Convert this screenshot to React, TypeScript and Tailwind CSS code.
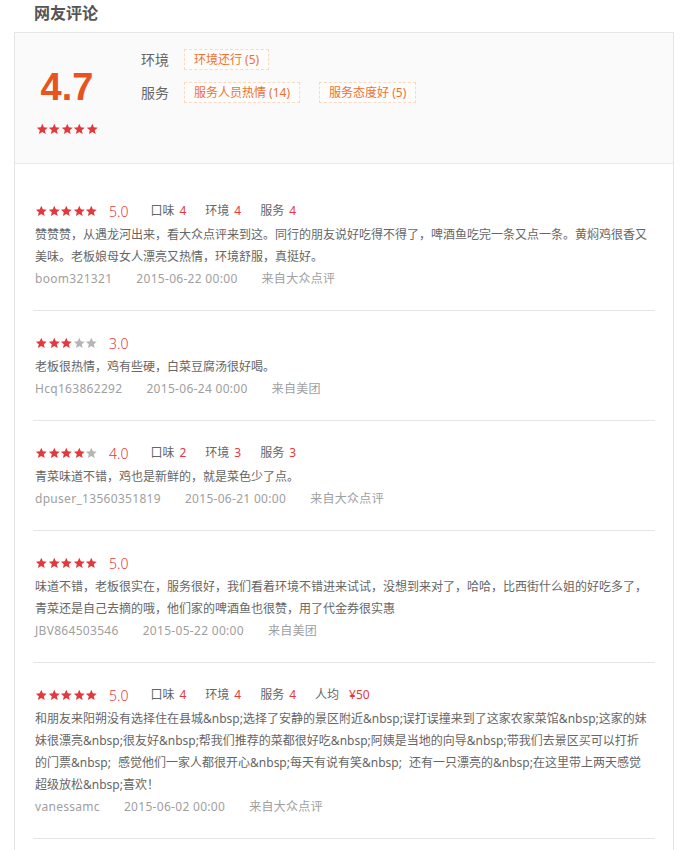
import React from 'react';

type Sub = { label: string; value: string };
type Review = {
  stars: number;
  score: string;
  subs: Sub[];
  text: string;
  user: string;
  time: string;
  from: string;
};

const reviews: Review[] = [
  {
    stars: 5,
    score: '5.0',
    subs: [
      { label: '口味', value: '4' },
      { label: '环境', value: '4' },
      { label: '服务', value: '4' },
    ],
    text: '赞赞赞，从遇龙河出来，看大众点评来到这。同行的朋友说好吃得不得了，啤酒鱼吃完一条又点一条。黄焖鸡很香又美味。老板娘母女人漂亮又热情，环境舒服，真挺好。',
    user: 'boom321321',
    time: '2015-06-22 00:00',
    from: '来自大众点评',
  },
  {
    stars: 3,
    score: '3.0',
    subs: [],
    text: '老板很热情，鸡有些硬，白菜豆腐汤很好喝。',
    user: 'Hcq163862292',
    time: '2015-06-24 00:00',
    from: '来自美团',
  },
  {
    stars: 4,
    score: '4.0',
    subs: [
      { label: '口味', value: '2' },
      { label: '环境', value: '3' },
      { label: '服务', value: '3' },
    ],
    text: '青菜味道不错，鸡也是新鲜的，就是菜色少了点。',
    user: 'dpuser_13560351819',
    time: '2015-06-21 00:00',
    from: '来自大众点评',
  },
  {
    stars: 5,
    score: '5.0',
    subs: [],
    text: '味道不错，老板很实在，服务很好，我们看着环境不错进来试试，没想到来对了，哈哈，比西街什么姐的好吃多了，青菜还是自己去摘的哦，他们家的啤酒鱼也很赞，用了代金券很实惠',
    user: 'JBV864503546',
    time: '2015-05-22 00:00',
    from: '来自美团',
  },
  {
    stars: 5,
    score: '5.0',
    subs: [
      { label: '口味', value: '4' },
      { label: '环境', value: '4' },
      { label: '服务', value: '4' },
      { label: '人均', value: '¥50' },
    ],
    text: '和朋友来阳朔没有选择住在县城&nbsp;选择了安静的景区附近&nbsp;误打误撞来到了这家农家菜馆&nbsp;这家的妹妹很漂亮&nbsp;很友好&nbsp;帮我们推荐的菜都很好吃&nbsp;阿姨是当地的向导&nbsp;带我们去景区买可以打折的门票&nbsp; 感觉他们一家人都很开心&nbsp;每天有说有笑&nbsp; 还有一只漂亮的&nbsp;在这里带上两天感觉超级放松&nbsp;喜欢！',
    user: 'vanessamc',
    time: '2015-06-02 00:00',
    from: '来自大众点评',
  },
  {
    stars: 5,
    score: '5.0',
    subs: [],
    text: '环境很好，菜的味道也不错，老板人很好。',
    user: 'liuyan0815',
    time: '2015-05-18 00:00',
    from: '来自美团',
  },
];

function Star({ on, size = 12 }: { on: boolean; size?: number }) {
  return (
    <svg width={size + 0.6} height={size} viewBox="0 0 24 24" className="shrink-0">
      <path
        d="M12 1.5l3.1 7.2 7.8.6-5.9 5.1 1.8 7.6L12 17.9 5.2 22l1.8-7.6L1.1 9.3l7.8-.6z"
        fill={on ? '#e4393c' : '#b5b5b5'}
      />
    </svg>
  );
}

function Stars({ count, size }: { count: number; size?: number }) {
  return (
    <div className="flex items-center">
      {[0, 1, 2, 3, 4].map((i) => (
        <Star key={i} on={i < count} size={size} />
      ))}
    </div>
  );
}

function Tag({ children }: { children: React.ReactNode }) {
  return (
    <span className="inline-flex h-[21px] items-center border border-dashed border-[#f8d9c3] bg-[#fffdfb] px-[9px] text-[12px] text-[#ee7035]">
      {children}
    </span>
  );
}

function ReviewItem({ r }: { r: Review }) {
  return (
    <div className="border-b border-[#e6e6e6] pt-[22px] pr-[7px] pb-[20px] pl-[2px]">
      <div className="flex h-[20px] items-center">
        <Stars count={r.stars} />
        <span className="ml-[11px] text-[14px] font-light text-[#e4393c]">{r.score}</span>
        <div className="ml-[22px] flex items-center text-[12px]">
          {r.subs.map((s) => (
            <span key={s.label} className="mr-[19px] text-[#666]">
              {s.label}
              <span className={s.label === '人均' ? 'ml-[10px] text-[#e4393c]' : 'ml-[5px] text-[#e4393c]'}>
                {s.value}
              </span>
            </span>
          ))}
        </div>
      </div>
      <p className="mt-[3px] break-all text-[12px] leading-[22px] text-[#666] [word-spacing:4px]">{r.text}</p>
      <div className="flex text-[12px] leading-[22px] tracking-[0.3px] text-[#a0a0a0]">
        <span>{r.user}</span>
        <span className="ml-[24px]">{r.time}</span>
        <span className="ml-[24px]">{r.from}</span>
      </div>
    </div>
  );
}

export default function App() {
  return (
    <div
      className="min-h-screen bg-white px-[14px]"
      style={{ fontFamily: '"Noto Sans", "Noto Sans CJK SC", sans-serif' }}
    >
      <h2 className="pl-[20px] text-[16px] font-bold leading-[26px] text-[#555]">网友评论</h2>

      <div className="mt-[6px] border border-[#e5e5e5]">
        <div className="flex h-[131px] border-b border-[#e8e8e8] bg-[#fafafa]">
          <div className="flex w-[104px] flex-col items-center pt-[34px]">
            <div
              className="text-[38px] font-bold leading-[40px] text-[#e8531f]"
              style={{ fontFamily: '"Liberation Sans", Arial, sans-serif' }}
            >
              4.7
            </div>
            <div className="mt-[16px]">
              <Stars count={5} size={12} />
            </div>
          </div>
          <div className="ml-[22px] flex flex-col gap-[12px] pt-[16px]">
            <div className="flex items-center">
              <span className="w-[43px] text-[14px] text-[#666]">环境</span>
              <Tag>环境还行 (5)</Tag>
            </div>
            <div className="flex items-center gap-[19px]">
              <div className="flex items-center">
                <span className="w-[43px] text-[14px] text-[#666]">服务</span>
                <Tag>服务人员热情 (14)</Tag>
              </div>
              <Tag>服务态度好 (5)</Tag>
            </div>
          </div>
        </div>

        <div className="px-[18px] pt-[15px]">
          {reviews.map((r, i) => (
            <ReviewItem key={i} r={r} />
          ))}
        </div>
      </div>
    </div>
  );
}
